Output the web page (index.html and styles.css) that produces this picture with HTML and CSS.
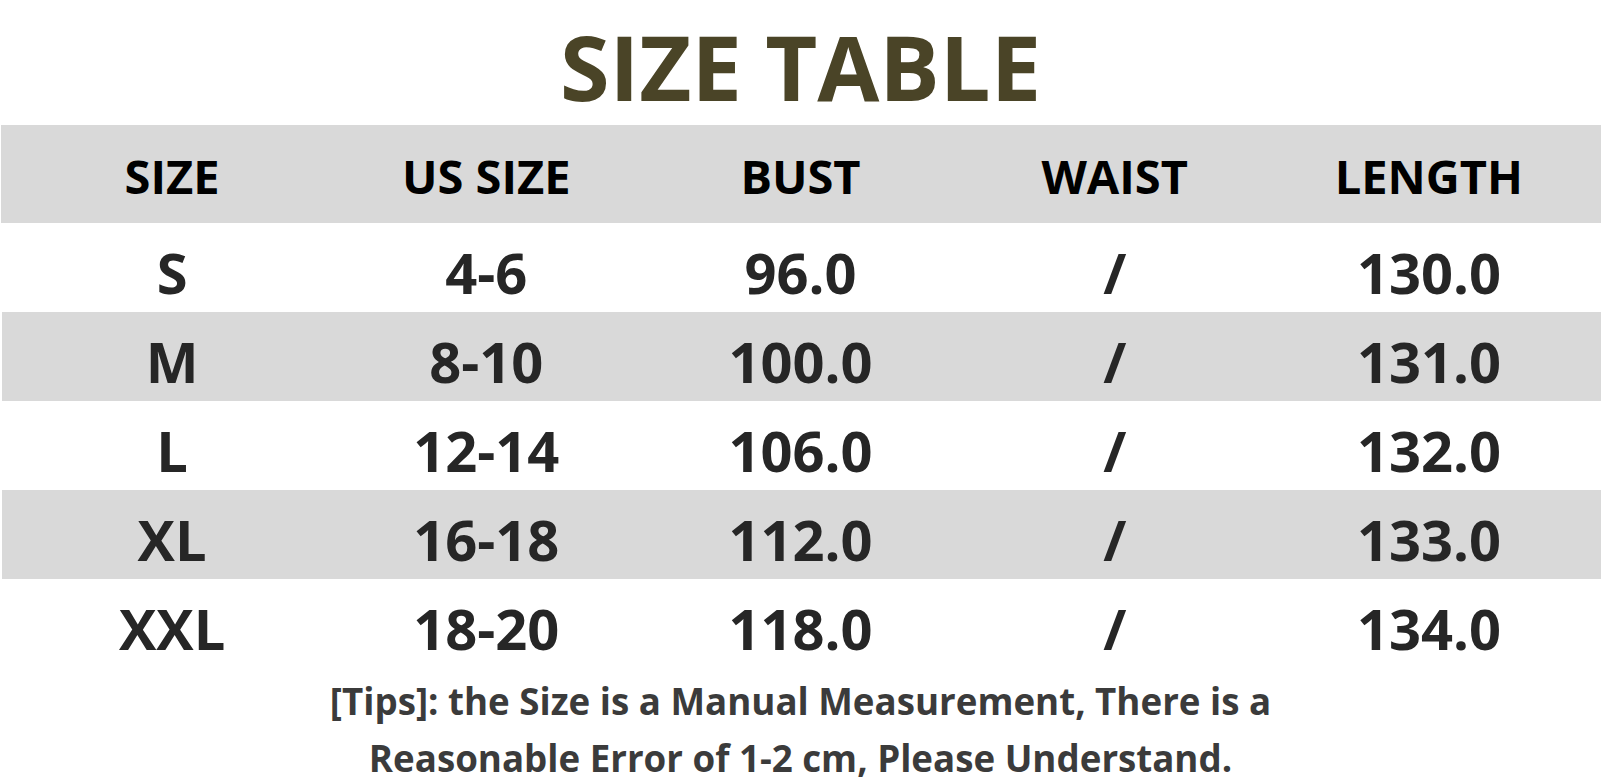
FILE: index.html
```html
<!DOCTYPE html>
<html lang="en">
<head>
<meta charset="utf-8">
<title>Size Table</title>
<link rel="stylesheet" href="styles.css">
</head>
<body>
<div class="page">
  <h1 class="title">SIZE TABLE</h1>
  <div class="table">
    <div class="row head">
      <div class="cell">SIZE</div>
      <div class="cell">US SIZE</div>
      <div class="cell">BUST</div>
      <div class="cell">WAIST</div>
      <div class="cell">LENGTH</div>
    </div>
    <div class="row">
      <div class="cell">S</div>
      <div class="cell">4-6</div>
      <div class="cell">96.0</div>
      <div class="cell">/</div>
      <div class="cell">130.0</div>
    </div>
    <div class="row alt">
      <div class="cell">M</div>
      <div class="cell">8-10</div>
      <div class="cell">100.0</div>
      <div class="cell">/</div>
      <div class="cell">131.0</div>
    </div>
    <div class="row">
      <div class="cell">L</div>
      <div class="cell">12-14</div>
      <div class="cell">106.0</div>
      <div class="cell">/</div>
      <div class="cell">132.0</div>
    </div>
    <div class="row alt">
      <div class="cell">XL</div>
      <div class="cell">16-18</div>
      <div class="cell">112.0</div>
      <div class="cell">/</div>
      <div class="cell">133.0</div>
    </div>
    <div class="row">
      <div class="cell">XXL</div>
      <div class="cell">18-20</div>
      <div class="cell">118.0</div>
      <div class="cell">/</div>
      <div class="cell">134.0</div>
    </div>
  </div>
  <p class="tips">[Tips]: the Size is a Manual Measurement, There is a<br>Reasonable Error of 1-2 cm, Please Understand.</p>
</div>
</body>
</html>
```

FILE: styles.css
```css
html, body {
  margin: 0;
  padding: 0;
  background: #ffffff;
}

.page {
  width: 1601px;
  height: 784px;
  overflow: hidden;
  font-family: "Open Sans", "Liberation Sans", sans-serif;
  font-weight: 700;
}

.title {
  margin: 0;
  height: 125px;
  box-sizing: border-box;
  padding-top: 21px;
  font-size: 90px;
  line-height: 90px;
  font-weight: 700;
  color: #4a4427;
  text-align: center;
}

.table {
  display: flex;
  flex-direction: column;
}

.row {
  display: grid;
  grid-template-columns: repeat(5, 1fr);
  padding: 0 15px 0 15px;
  height: 89px;
  align-items: center;
  color: #262626;
  font-size: 56px;
  line-height: 1;
}

.row.head {
  height: 98px;
  background: #d9d9d9;
  margin-left: 1px;
  padding-left: 14px;
  color: #000000;
  font-size: 47px;
  padding-top: 4px;
  box-sizing: border-box;
}

.row.alt {
  background: #d9d9d9;
  margin-left: 2px;
  padding-left: 13px;
}

.cell {
  text-align: center;
  padding-top: 8px;
}

.head .cell {
  padding-top: 0;
}

.tips {
  margin: 0;
  padding-top: 5px;
  font-size: 36.7px;
  line-height: 57px;
  color: #3b3b3b;
  text-align: center;
}
```
